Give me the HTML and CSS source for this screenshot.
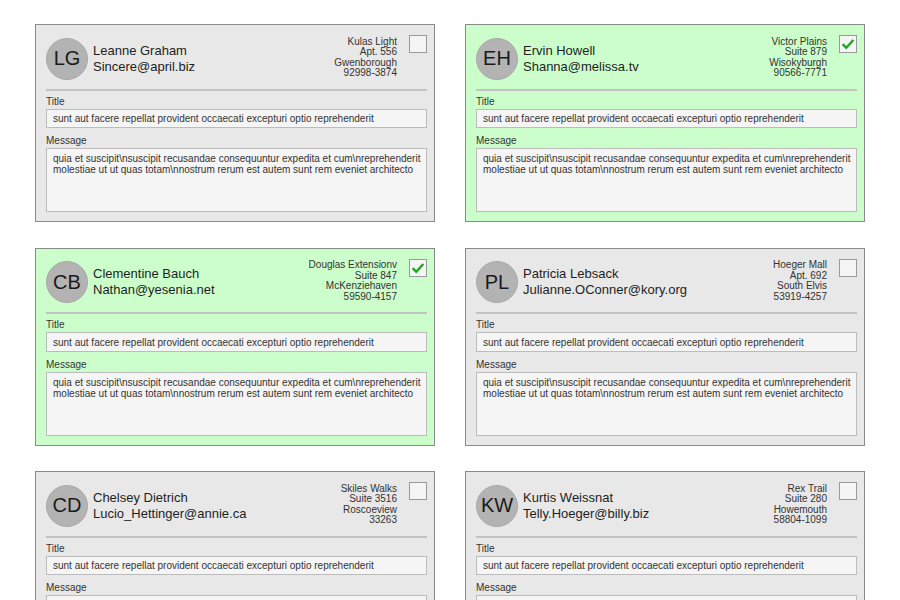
FILE: index.html
```html
<!DOCTYPE html>
<html>
<head>
<meta charset="utf-8">
<link rel="stylesheet" href="styles.css">
</head>
<body>
<main class="grid">
  <section class="card">
    <header class="card-head">
      <div class="avatar">LG</div>
      <div class="ident"><div>Leanne Graham</div><div>Sincere@april.biz</div></div>
      <address class="addr">Kulas Light<br>Apt. 556<br>Gwenborough<br>92998-3874</address>
      <span class="check"></span>
    </header>
    <hr class="sep">
    <label class="lbl">Title</label>
    <input class="field" readonly value="sunt aut facere repellat provident occaecati excepturi optio reprehenderit">
    <label class="lbl lbl-msg">Message</label>
    <textarea class="area" readonly>quia et suscipit\nsuscipit recusandae consequuntur expedita et cum\nreprehenderit molestiae ut ut quas totam\nnostrum rerum est autem sunt rem eveniet architecto</textarea>
  </section>

  <section class="card selected">
    <header class="card-head">
      <div class="avatar">EH</div>
      <div class="ident"><div>Ervin Howell</div><div>Shanna@melissa.tv</div></div>
      <address class="addr">Victor Plains<br>Suite 879<br>Wisokyburgh<br>90566-7771</address>
      <span class="check on"><svg viewBox="0 0 18 18" width="16" height="16"><path d="M3 9.2 L7 13.2 L15 4.5" fill="none" stroke="#1fa51f" stroke-width="2.6"/></svg></span>
    </header>
    <hr class="sep">
    <label class="lbl">Title</label>
    <input class="field" readonly value="sunt aut facere repellat provident occaecati excepturi optio reprehenderit">
    <label class="lbl lbl-msg">Message</label>
    <textarea class="area" readonly>quia et suscipit\nsuscipit recusandae consequuntur expedita et cum\nreprehenderit molestiae ut ut quas totam\nnostrum rerum est autem sunt rem eveniet architecto</textarea>
  </section>

  <section class="card selected">
    <header class="card-head">
      <div class="avatar">CB</div>
      <div class="ident"><div>Clementine Bauch</div><div>Nathan@yesenia.net</div></div>
      <address class="addr">Douglas Extensionv<br>Suite 847<br>McKenziehaven<br>59590-4157</address>
      <span class="check on"><svg viewBox="0 0 18 18" width="16" height="16"><path d="M3 9.2 L7 13.2 L15 4.5" fill="none" stroke="#1fa51f" stroke-width="2.6"/></svg></span>
    </header>
    <hr class="sep">
    <label class="lbl">Title</label>
    <input class="field" readonly value="sunt aut facere repellat provident occaecati excepturi optio reprehenderit">
    <label class="lbl lbl-msg">Message</label>
    <textarea class="area" readonly>quia et suscipit\nsuscipit recusandae consequuntur expedita et cum\nreprehenderit molestiae ut ut quas totam\nnostrum rerum est autem sunt rem eveniet architecto</textarea>
  </section>

  <section class="card">
    <header class="card-head">
      <div class="avatar">PL</div>
      <div class="ident"><div>Patricia Lebsack</div><div>Julianne.OConner@kory.org</div></div>
      <address class="addr">Hoeger Mall<br>Apt. 692<br>South Elvis<br>53919-4257</address>
      <span class="check"></span>
    </header>
    <hr class="sep">
    <label class="lbl">Title</label>
    <input class="field" readonly value="sunt aut facere repellat provident occaecati excepturi optio reprehenderit">
    <label class="lbl lbl-msg">Message</label>
    <textarea class="area" readonly>quia et suscipit\nsuscipit recusandae consequuntur expedita et cum\nreprehenderit molestiae ut ut quas totam\nnostrum rerum est autem sunt rem eveniet architecto</textarea>
  </section>

  <section class="card">
    <header class="card-head">
      <div class="avatar">CD</div>
      <div class="ident"><div>Chelsey Dietrich</div><div>Lucio_Hettinger@annie.ca</div></div>
      <address class="addr">Skiles Walks<br>Suite 3516<br>Roscoeview<br>33263</address>
      <span class="check"></span>
    </header>
    <hr class="sep">
    <label class="lbl">Title</label>
    <input class="field" readonly value="sunt aut facere repellat provident occaecati excepturi optio reprehenderit">
    <label class="lbl lbl-msg">Message</label>
    <textarea class="area" readonly>quia et suscipit\nsuscipit recusandae consequuntur expedita et cum\nreprehenderit molestiae ut ut quas totam\nnostrum rerum est autem sunt rem eveniet architecto</textarea>
  </section>

  <section class="card">
    <header class="card-head">
      <div class="avatar">KW</div>
      <div class="ident"><div>Kurtis Weissnat</div><div>Telly.Hoeger@billy.biz</div></div>
      <address class="addr">Rex Trail<br>Suite 280<br>Howemouth<br>58804-1099</address>
      <span class="check"></span>
    </header>
    <hr class="sep">
    <label class="lbl">Title</label>
    <input class="field" readonly value="sunt aut facere repellat provident occaecati excepturi optio reprehenderit">
    <label class="lbl lbl-msg">Message</label>
    <textarea class="area" readonly>quia et suscipit\nsuscipit recusandae consequuntur expedita et cum\nreprehenderit molestiae ut ut quas totam\nnostrum rerum est autem sunt rem eveniet architecto</textarea>
  </section>
</main>
</body>
</html>
```
FILE: styles.css
```css
html, body {
  margin: 0;
  padding: 0;
  background: #ffffff;
  font-family: "Liberation Sans", Arial, sans-serif;
  color: #222;
}

.grid {
  display: grid;
  grid-template-columns: 400px 400px;
  column-gap: 30px;
  row-gap: 25.5px;
  padding: 24px 35px 0 35px;
}

.card {
  box-sizing: border-box;
  width: 400px;
  height: 198px;
  border: 1px solid #8a8a8a;
  background: #e8e8e8;
  padding: 9px 7px 9px 10px;
  display: flex;
  flex-direction: column;
}

.card.selected {
  background: #ccfecc;
}

.card-head {
  display: flex;
  align-items: center;
  height: 50px;
}

.avatar {
  box-sizing: border-box;
  width: 42px;
  height: 42px;
  border-radius: 50%;
  background: #b3b3b3;
  border: 1px solid #a9a9a9;
  display: flex;
  align-items: center;
  justify-content: center;
  font-size: 20px;
  color: #1a1a1a;
  flex: none;
}

.ident {
  margin-left: 5px;
  font-size: 13px;
  line-height: 16px;
  color: #1e1e1e;
  flex: 1;
}

.addr {
  font-style: normal;
  text-align: right;
  font-size: 10px;
  line-height: 10.4px;
  color: #333;
  margin-right: 12px;
  margin-bottom: 2px;
}

.check {
  box-sizing: border-box;
  align-self: flex-start;
  margin-top: 1px;
  width: 18px;
  height: 18px;
  border: 1px solid #9a9a9a;
  background: #f5f5f5;
  display: flex;
  align-items: center;
  justify-content: center;
  flex: none;
}

.sep {
  margin: 5px 0 0 0;
  height: 0;
  border: 0;
  border-top: 2px solid #c2c2c2;
}

.lbl {
  display: block;
  font-size: 10px;
  line-height: 12px;
  color: #333;
  margin-top: 5px;
}

.lbl-msg {
  margin-top: 7px;
}

.field, .area {
  box-sizing: border-box;
  display: block;
  width: 100%;
  margin: 1px 0 0 0;
  border: 1px solid #bcbcbc;
  background: #f5f5f5;
  font-family: "Liberation Sans", Arial, sans-serif;
  font-size: 10px;
  color: #333;
  outline: none;
  border-radius: 0;
}

.field {
  height: 20px;
  padding: 0 4px 0 6px;
  line-height: 18px;
}

.area {
  height: 64px;
  padding: 4px 3px 4px 6px;
  line-height: 11px;
  resize: none;
  overflow: hidden;
}
```
